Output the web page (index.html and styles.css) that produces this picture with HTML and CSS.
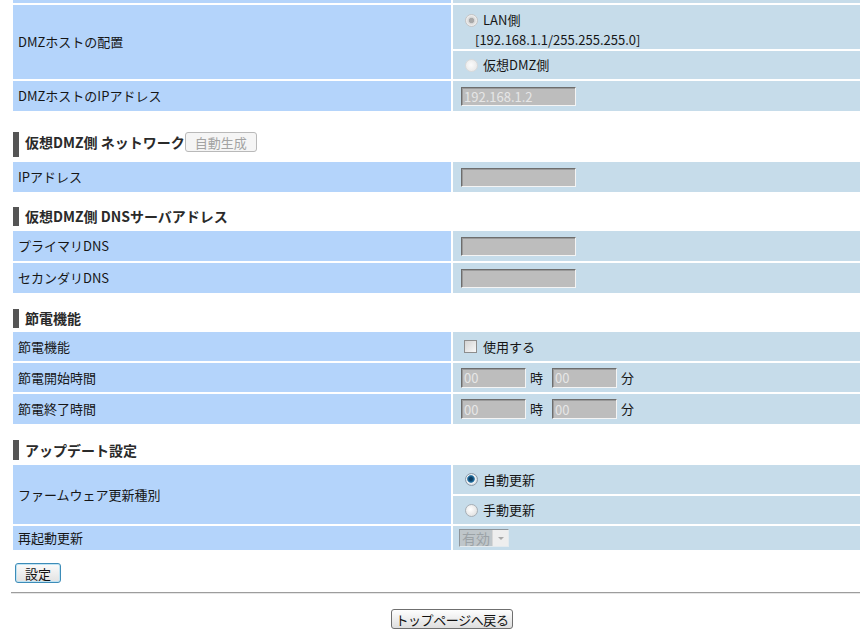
FILE: index.html
```html
<!DOCTYPE html>
<html lang="ja">
<head>
<meta charset="utf-8">
<title>DMZ設定</title>
<link rel="stylesheet" href="styles.css">
</head>
<body>
<div class="page">
  <div class="form">
    <div class="lbl cut"></div><div class="val cut"></div>
    <div class="lbl span2">DMZホストの配置</div>
    <div class="val lan">
      <label class="opt"><input class="rd rd-dis-on" type="radio" name="dmz" checked disabled><span>LAN側</span></label>
      <div class="sub">[192.168.1.1/255.255.255.0]</div>
    </div>
    <div class="val h28"><label class="opt"><input class="rd rd-dis" type="radio" name="dmz" disabled><span>仮想DMZ側</span></label></div>
    <div class="lbl">DMZホストのIPアドレス</div>
    <div class="val"><input class="txt ip" type="text" value="192.168.1.2" disabled></div>
  </div>

  <h3 class="sec sec-net">仮想DMZ側 ネットワーク<button class="btn-gen" type="button" disabled>自動生成</button></h3>
  <div class="form">
    <div class="lbl">IPアドレス</div>
    <div class="val"><input class="txt ip" type="text" value="" disabled></div>
  </div>

  <h3 class="sec sec-dns">仮想DMZ側 DNSサーバアドレス</h3>
  <div class="form">
    <div class="lbl">プライマリDNS</div>
    <div class="val"><input class="txt ip" type="text" value="" disabled></div>
    <div class="lbl">セカンダリDNS</div>
    <div class="val"><input class="txt ip" type="text" value="" disabled></div>
  </div>

  <h3 class="sec sec-eco">節電機能</h3>
  <div class="form">
    <div class="lbl h29">節電機能</div>
    <div class="val h29"><label class="opt"><input class="cb" type="checkbox"><span>使用する</span></label></div>
    <div class="lbl h29">節電開始時間</div>
    <div class="val h29"><input class="txt tm" type="text" value="00" disabled><span class="unit">時</span><input class="txt tm" type="text" value="00" disabled><span class="unit">分</span></div>
    <div class="lbl">節電終了時間</div>
    <div class="val"><input class="txt tm" type="text" value="00" disabled><span class="unit">時</span><input class="txt tm" type="text" value="00" disabled><span class="unit">分</span></div>
  </div>

  <h3 class="sec sec-upd">アップデート設定</h3>
  <div class="form">
    <div class="lbl span2">ファームウェア更新種別</div>
    <div class="val h29"><label class="opt"><input class="rd rd-on" type="radio" name="fw" checked><span>自動更新</span></label></div>
    <div class="val h28"><label class="opt"><input class="rd rd-off" type="radio" name="fw"><span>手動更新</span></label></div>
    <div class="lbl h24">再起動更新</div>
    <div class="val h24 val-sel">
      <span class="sel"><select disabled><option>有効</option></select><span class="arrow"></span></span>
    </div>
  </div>

  <div class="actions"><button class="btn btn-set" type="button">設定</button></div>
  <hr class="rule">
  <div class="back"><button class="btn btn-back" type="button">トップページへ戻る</button></div>
</div>
</body>
</html>
```
FILE: styles.css
```css
html, body {
  margin: 0;
  padding: 0;
  overflow: hidden;
  background: #fff;
}
body {
  font-family: "Noto Sans CJK JP", "Noto Sans", sans-serif;
  font-size: 13px;
  line-height: 18px;
  color: #161616;
}
.page {
  margin-left: 11px;
  width: 882px;
}
.form {
  margin-left: 2px;
  display: grid;
  grid-template-columns: 438px 440px;
  column-gap: 2px;
  row-gap: 2px;
}
.lbl, .val {
  min-height: 30px;
  display: flex;
  align-items: center;
  box-sizing: border-box;
}
.lbl {
  background: #b4d4fb;
  padding-left: 5px;
}
.val {
  background: #c6dcea;
  padding-left: 8px;
}
.cut { min-height: 0; height: 3px; }
.span2 { grid-row: span 2; }
.h28 { min-height: 28px; }
.h29 { min-height: 29px; }
.h24 { min-height: 24px; height: 24px; }
.lan {
  min-height: 44px;
  height: 44px;
  flex-direction: column;
  align-items: flex-start;
  justify-content: flex-start;
  padding-top: 5px;
}
.lan .opt { height: 20px; }
.lan .sub { margin-left: 14px; line-height: 19px; }
.opt {
  display: flex;
  align-items: center;
}

/* radios & checkbox */
.rd {
  appearance: none;
  -webkit-appearance: none;
  width: 13px;
  height: 13px;
  border-radius: 50%;
  margin: 0 5px 0 4px;
  box-sizing: border-box;
}
.rd-dis-on {
  border: 1px solid #c4c4c4;
  background: radial-gradient(circle, #a8a8a8 0 2.3px, #d6d6d6 3px, #f2f2f2 5.5px);
}
.rd-dis {
  border: 1px solid #dadada;
  background: radial-gradient(circle at 45% 45%, #fbfbfb, #e4e4e4);
}
.rd-on {
  border: 1px solid #8b9aa8;
  background: radial-gradient(circle at 45% 45%, #0b3e63 0 1.5px, #1f6b9c 3px, #5a93b8 3.6px, #f4f6f8 4.2px, #d5dbe1 6px);
}
.rd-off {
  border: 1px solid #a6aeb5;
  background: radial-gradient(circle at 40% 40%, #ffffff, #d9d9d9);
}
.cb {
  appearance: none;
  -webkit-appearance: none;
  width: 13px;
  height: 13px;
  margin: 0 6px 0 3px;
  box-sizing: border-box;
  border: 1px solid #8d8d8d;
  background: linear-gradient(135deg, #d4d4d4, #f8f8f8);
}

/* text inputs */
.txt {
  box-sizing: border-box;
  margin: 0;
  background: #bdbdbd;
  border: 1px solid;
  border-color: #6d6d6d #f4f4f4 #f4f4f4 #6d6d6d;
  box-shadow: inset 1px 1px 0 #9a9a9a;
  font-family: inherit;
  font-size: 13px;
  color: #e6e6e6;
  padding: 0 2px;
  line-height: 16px;
}
.ip { width: 115px; height: 19px; }
.tm { width: 65px; height: 20px; }
.unit { margin: 0 9px 0 4px; }

/* headings */
.sec {
  margin: 15px 0 5px 2px;
  border-left: 6px solid #555;
  padding-left: 6px;
  height: 19px;
  display: flex;
  align-items: center;
  font-size: 14px;
  font-weight: bold;
  color: #2a2a2a;
  line-height: 19px;
}
.sec-net {
  margin-top: 21px;
  height: 25px;
  align-items: flex-start;
  line-height: 20px;
}
.sec-dns { margin-top: 15px; }
.sec-eco { margin-top: 16px; margin-bottom: 4px; }
.sec-upd { margin-top: 16px; height: 20px; }
.btn-gen {
  margin-left: 0;
  width: 72px;
  height: 20px;
  box-sizing: border-box;
  border: 1px solid #b9b9b9;
  border-radius: 3px;
  background: #f5f5f5;
  color: #a3a3a3;
  font-family: inherit;
  font-size: 13px;
  font-weight: normal;
  padding: 0;
  line-height: 17px;
}

/* select */
.val-sel { padding-left: 6px; }
.sel {
  position: relative;
  display: inline-block;
  width: 50px;
  height: 18px;
}
.sel select {
  appearance: none;
  -webkit-appearance: none;
  width: 50px;
  height: 18px;
  box-sizing: border-box;
  margin: 0;
  border: 1px solid;
  border-color: #777 #f0f0f0 #f0f0f0 #777;
  background: #bdbdbd;
  color: #8a8a8a;
  font-family: inherit;
  font-size: 14px;
  padding: 0 0 0 2px;
  line-height: 16px;
}
.sel .arrow {
  position: absolute;
  right: 1px;
  top: 1px;
  width: 15px;
  height: 16px;
  background: #eeeeee;
  border-left: 1px solid #d8d8d8;
}
.sel .arrow::after {
  content: "";
  position: absolute;
  left: 5px;
  top: 7px;
  border-left: 3px solid transparent;
  border-right: 3px solid transparent;
  border-top: 3px solid #a9a9a9;
}

/* buttons */
.actions {
  margin-top: 13px;
  padding-left: 4px;
  height: 20px;
}
.btn {
  box-sizing: border-box;
  height: 20px;
  padding: 0;
  font-family: inherit;
  font-size: 13px;
  color: #111;
  border-radius: 3px;
  line-height: 17px;
  white-space: nowrap;
}
.btn-set {
  width: 46px;
  border: 1px solid #3d8cb8;
  box-shadow: inset 0 0 0 1px #bfe3f3;
  background: linear-gradient(#fbfbfb, #e2e2e2);
}
.rule {
  margin: 9px 0 0 0;
  height: 0;
  border: 0;
  border-top: 1px solid #9d9d9d;
  border-bottom: 1px solid #e6e6e6;
}
.back {
  margin-top: 15px;
  display: flex;
  justify-content: center;
}
.btn-back {
  width: 122px;
  letter-spacing: -0.4px;
  border: 1px solid #6f6f6f;
  background: linear-gradient(#fefefe, #dedede);
}
```
